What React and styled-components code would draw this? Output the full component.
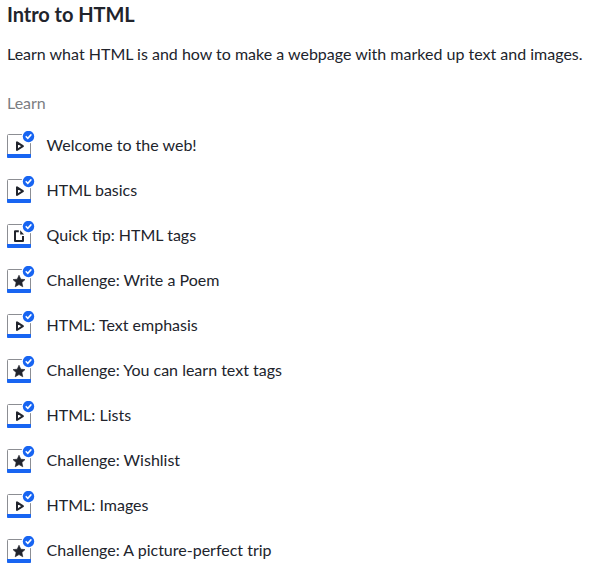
import React from "react";
import styled, { createGlobalStyle } from "styled-components";

const GlobalStyle = createGlobalStyle`
  body { margin: 0; background: #fff; }
`;
const Page = styled.main`
  box-sizing: border-box;
  height: 569px;
  overflow: hidden;
  padding: 2px 0 0 7px;
  font-family: Lato, sans-serif;
  color: #21242c;
  white-space: nowrap;
`;
const Title = styled.h1`
  margin: 0;
  font-size: 20px;
  line-height: 24px;
  font-weight: 700;
  letter-spacing: -0.05px;
`;
const Intro = styled.p`
  margin: 17px 0 0;
  font-size: 16px;
  line-height: 22px;
`;
const Label = styled.h2`
  margin: 28px 0 0;
  font-size: 16px;
  line-height: 20px;
  font-weight: 400;
  color: #7b7d82;
`;
const List = styled.ul`
  list-style: none;
  margin: 9px 0 0;
  padding: 0;
`;
const Item = styled.li`
  display: flex;
  align-items: flex-start;
  box-sizing: border-box;
  height: 45px;
  padding-top: 9px;
  gap: 11.6px;
  font-size: 16px;
  line-height: 28px;
`;
const Icon = styled.svg`
  display: block;
  flex: none;
  width: 28px;
  height: 28px;
`;

const glyphs = {
  video: <path d="M10 11.4v7.6l5.900-3.800z" fill="none" stroke="#21242c" strokeWidth="2" strokeLinejoin="round" />,
  article: (
    <>
      <path d="M11.800 10.200H8v9.800h8v-5" fill="none" stroke="#21242c" strokeWidth="2" strokeLinejoin="round" />
      <path d="M13.200 9.200l3.800 4.200h-3.800z" fill="#21242c" />
    </>
  ),
  star: <path d="M12 9.200l1.800 4 4.200.4-3.100 2.900.9 4.300-3.800-2.200-3.800 2.200.9-4.300L6 13.600l4.200-.4z" fill="#21242c" stroke="#21242c" strokeWidth=".6" strokeLinejoin="round" />,
};

const items = [
  ["video", "Welcome to the web!"],
  ["video", "HTML basics"],
  ["article", "Quick tip: HTML tags"],
  ["star", "Challenge: Write a Poem"],
  ["video", "HTML: Text emphasis"],
  ["star", "Challenge: You can learn text tags"],
  ["video", "HTML: Lists"],
  ["star", "Challenge: Wishlist"],
  ["video", "HTML: Images"],
  ["star", "Challenge: A picture-perfect trip"],
];

function ContentIcon({ kind }) {
  return (
    <Icon viewBox="0 0 28 28" aria-hidden="true">
      <rect x=".5" y="3.5" width="23" height="23" rx="1" fill="#fff" stroke="#8c8e93" />
      <path d="M0 23h24v3a1 1 0 0 1-1 1H1a1 1 0 0 1-1-1z" fill="#1865f2" />
      {glyphs[kind]}
      <circle cx="21.5" cy="5.5" r="6.9" fill="#fff" />
      <circle cx="21.5" cy="5.5" r="5.700" fill="#1865f2" />
      <path d="M19.200 5.700l1.600 1.600 3.100-3.400" fill="none" stroke="#fff" strokeWidth="1.6" strokeLinecap="round" />
    </Icon>
  );
}

export default function App() {
  return (
    <Page>
      <GlobalStyle />
      <Title>Intro to HTML</Title>
      <Intro>Learn what HTML is and how to make a webpage with marked up text and images.</Intro>
      <Label>Learn</Label>
      <List>
        {items.map(([kind, text]) => (
          <Item key={text}><ContentIcon kind={kind} />{text}</Item>
        ))}
      </List>
    </Page>
  );
}
